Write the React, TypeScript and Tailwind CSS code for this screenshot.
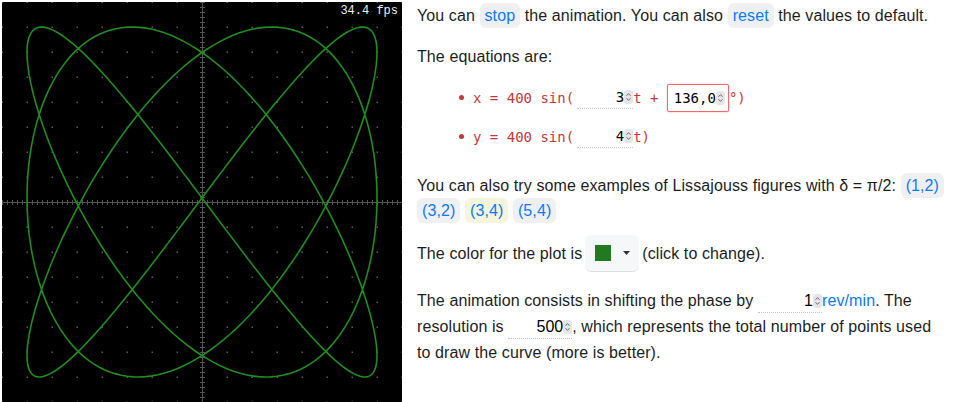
import React from 'react';

const CX = 200;
const CY = 200;
const AMP = 175;

function curvePath(a: number, b: number, deltaDeg: number, n: number) {
  const d = (deltaDeg * Math.PI) / 180;
  const pts: string[] = [];
  for (let i = 0; i <= n; i++) {
    const t = (i / n) * Math.PI * 2;
    const x = CX + AMP * Math.sin(a * t + d);
    const y = CY - AMP * Math.sin(b * t);
    pts.push(`${x.toFixed(2)},${y.toFixed(2)}`);
  }
  return 'M' + pts.join(' L');
}

function Scope() {
  const dots: React.ReactNode[] = [];
  for (let gx = 0; gx <= 400; gx += 25) {
    for (let gy = 0; gy <= 400; gy += 25) {
      dots.push(<rect key={`${gx}-${gy}`} x={gx - 0.5} y={gy - 0.5} width={1.5} height={1.5} fill="#5a5a5a" />);
    }
  }
  const ticks: React.ReactNode[] = [];
  for (let p = 0; p <= 400; p += 5) {
    ticks.push(<rect key={`h${p}`} x={p} y={CY - 2} width={1} height={5} fill="#555" />);
    ticks.push(<rect key={`v${p}`} x={CX - 2} y={p} width={5} height={1} fill="#555" />);
  }
  return (
    <svg width={400} height={400} viewBox="0 0 400 400" className="block">
      <rect width={400} height={400} fill="#000" />
      {dots}
      <rect x={CX} y={0} width={1} height={400} fill="#555" />
      <rect x={0} y={CY} width={400} height={1} fill="#555" />
      {ticks}
      <path d={curvePath(3, 4, 136, 500)} fill="none" stroke="#228b22" strokeWidth={1.6} />
      <text x={396} y={12} textAnchor="end" fill="#eee" fontSize={12} fontFamily="'Liberation Mono', monospace">
        34.4 fps
      </text>
    </svg>
  );
}

function Spin() {
  return (
    <span className="inline-flex h-[14px] w-[9px] shrink-0 items-center justify-center rounded-[3px] bg-[#e6e6e9]">
      <svg width="7" height="12" viewBox="0 0 7 12">
        <path d="M1.5 4.8 3.5 2.6 5.5 4.8M1.5 7.2 3.5 9.4 5.5 7.2" fill="none" stroke="#6b6b6b" strokeWidth="1" />
      </svg>
    </span>
  );
}

function NumBox({ value, className = '' }: { value: string; className?: string }) {
  return (
    <span
      className={
        'inline-flex w-[4em] items-center justify-end border-b border-dotted border-[#c4c4c4] align-middle leading-[22px] tracking-normal text-black ' +
        className
      }
    >
      {value}
      <Spin />
    </span>
  );
}

function Btn({ children, active }: { children: React.ReactNode; active?: boolean }) {
  return (
    <span
      className={
        'inline-block rounded-md px-[5px] leading-[25px] text-[#0a7aff] ' +
        (active ? 'bg-[#f5f5dc]' : 'bg-[#f0f0f2]')
      }
    >
      {children}
    </span>
  );
}

export default function App() {
  const mono = { fontFamily: "'DejaVu Sans Mono', monospace" };
  return (
    <div className="flex h-[402px] w-[957px] items-start overflow-hidden bg-white">
      <div className="m-[2px] shrink-0">
        <Scope />
      </div>

      <div
        className="ml-[13px] w-[530px] pt-[3px] text-[16px] leading-6 tracking-[0.1px] text-[#1d1d1f]"
        style={{ fontFamily: "'Liberation Sans', Arial, sans-serif" }}
      >
        <p>
          You can <Btn>stop</Btn> the animation. You can also <Btn>reset</Btn> the values to default.
        </p>

        <p className="mt-[17px]">The equations are:</p>

        <ul className="mt-[9px] pl-[42px] text-[14px] tracking-normal text-[#c4383d]" style={mono}>
          <li className="flex h-[39px] items-center">
            <span className="mr-[9px] h-[5px] w-[5px] rounded-full bg-[#c4383d]" />
            <span className="whitespace-pre">x = 400 sin(</span>
            <NumBox value="3" className="ml-[3px]" />
            <span className="whitespace-pre">t + </span>
            <span className="inline-flex h-[28px] w-[62px] items-center justify-end rounded-[2px] border border-[#f06a6a] bg-white pr-[3px] text-black shadow-[0_0_2px_rgba(240,106,106,0.5)]">
              136,0
              <Spin />
            </span>
            <span>°)</span>
          </li>
          <li className="flex h-[39px] items-center">
            <span className="mr-[9px] h-[5px] w-[5px] rounded-full bg-[#c4383d]" />
            <span className="whitespace-pre">y = 400 sin(</span>
            <NumBox value="4" className="ml-[3px]" />
            <span>t)</span>
          </li>
        </ul>

        <p className="mt-[17px]">
          You can also try some examples of Lissajouss figures with δ = π/2: <Btn>(1,2)</Btn> <Btn>(3,2)</Btn>{' '}
          <Btn active>(3,4)</Btn> <Btn>(5,4)</Btn>
        </p>

        <p className="mt-[12px] flex items-center">
          The color for the plot is
          <span className="mx-[3px] inline-flex h-[37px] w-[54px] items-center rounded-md border-b border-dotted border-[#c8c8c8] bg-[#f6f7f9] pl-[10px]">
            <span className="h-4 w-4 bg-[#217a21]" />
            <svg width="7" height="4" viewBox="0 0 7 4" className="ml-[12px]">
              <path d="M0 0h7L3.5 4z" fill="#333" />
            </svg>
          </span>
          (click to change).
        </p>

        <p className="mt-[16px] leading-[26px]">
          The animation consists in shifting the phase by <NumBox value="1" />
          <span className="text-[#0a7aff]">rev/min</span>. The resolution is <NumBox value="500" />, which
          represents the total number of points used to draw the curve (more is better).
        </p>
      </div>
    </div>
  );
}
